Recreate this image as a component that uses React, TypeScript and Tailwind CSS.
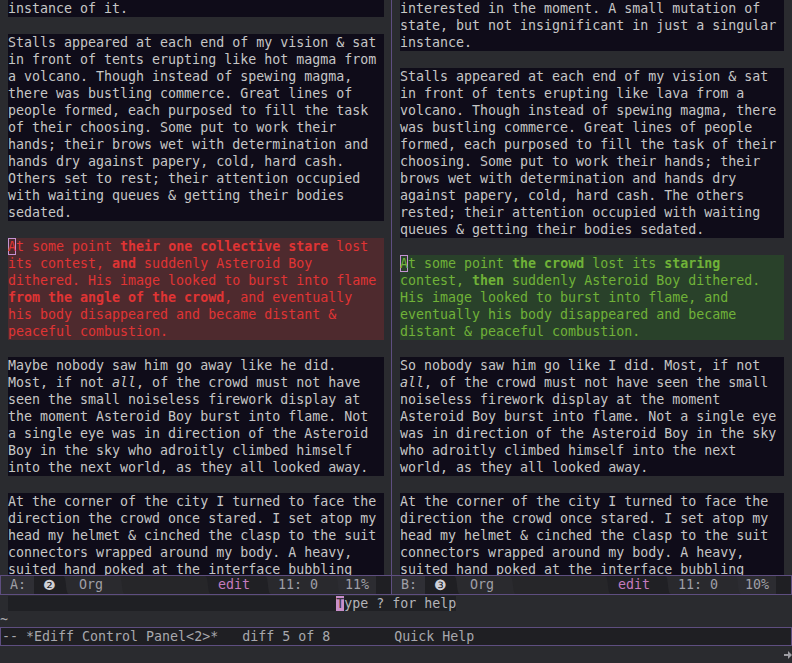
type Tone = "plain" | "red" | "green";
type Item = { lines: string[]; tone?: Tone; cursor?: boolean } | "gap";

const leftPane: Item[] = [
  { lines: ["instance of it."] },
  "gap",
  {
    lines: [
      "Stalls appeared at each end of my vision & sat",
      "in front of tents erupting like hot magma from",
      "a volcano. Though instead of spewing magma,",
      "there was bustling commerce. Great lines of",
      "people formed, each purposed to fill the task",
      "of their choosing. Some put to work their",
      "hands; their brows wet with determination and",
      "hands dry against papery, cold, hard cash.",
      "Others set to rest; their attention occupied",
      "with waiting queues & getting their bodies",
      "sedated.",
    ],
  },
  "gap",
  {
    tone: "red",
    cursor: true,
    lines: [
      "At some point **their one collective stare** lost",
      "its contest, **and** suddenly Asteroid Boy",
      "dithered. His image looked to burst into flame",
      "**from the angle of the crowd**, and eventually",
      "his body disappeared and became distant &",
      "peaceful combustion.",
    ],
  },
  "gap",
  {
    lines: [
      "Maybe nobody saw him go away like he did.",
      "Most, if not _all_, of the crowd must not have",
      "seen the small noiseless firework display at",
      "the moment Asteroid Boy burst into flame. Not",
      "a single eye was in direction of the Asteroid",
      "Boy in the sky who adroitly climbed himself",
      "into the next world, as they all looked away.",
    ],
  },
  "gap",
  {
    lines: [
      "At the corner of the city I turned to face the",
      "direction the crowd once stared. I set atop my",
      "head my helmet & cinched the clasp to the suit",
      "connectors wrapped around my body. A heavy,",
      "suited hand poked at the interface bubbling",
    ],
  },
];

const rightPane: Item[] = [
  {
    lines: [
      "interested in the moment. A small mutation of",
      "state, but not insignificant in just a singular",
      "instance.",
    ],
  },
  "gap",
  {
    lines: [
      "Stalls appeared at each end of my vision & sat",
      "in front of tents erupting like lava from a",
      "volcano. Though instead of spewing magma, there",
      "was bustling commerce. Great lines of people",
      "formed, each purposed to fill the task of their",
      "choosing. Some put to work their hands; their",
      "brows wet with determination and hands dry",
      "against papery, cold, hard cash. The others",
      "rested; their attention occupied with waiting",
      "queues & getting their bodies sedated.",
    ],
  },
  "gap",
  {
    tone: "green",
    cursor: true,
    lines: [
      "At some point **the crowd** lost its **staring**",
      "contest, **then** suddenly Asteroid Boy dithered.",
      "His image looked to burst into flame, and",
      "eventually his body disappeared and became",
      "distant & peaceful combustion.",
    ],
  },
  "gap",
  {
    lines: [
      "So nobody saw him go like I did. Most, if not",
      "_all_, of the crowd must not have seen the small",
      "noiseless firework display at the moment",
      "Asteroid Boy burst into flame. Not a single eye",
      "was in direction of the Asteroid Boy in the sky",
      "who adroitly climbed himself into the next",
      "world, as they all looked away.",
    ],
  },
  "gap",
  {
    lines: [
      "At the corner of the city I turned to face the",
      "direction the crowd once stared. I set atop my",
      "head my helmet & cinched the clasp to the suit",
      "connectors wrapped around my body. A heavy,",
      "suited hand poked at the interface bubbling",
    ],
  },
];

const toneClass: Record<Tone, string> = {
  plain: "bg-[#0f0c19] text-[#c6c6c6]",
  red: "bg-[#4e2a2e] text-[#e03434]",
  green: "bg-[#29412a] text-[#70b238]",
};

function Line({ text, cursor }: { text: string; cursor?: boolean }) {
  let rest = text;
  let head = null;
  if (cursor) {
    head = (
      <span className="inline-block h-[17px] align-top shadow-[inset_0_0_0_1px_#c592d2]">
        {text[0]}
      </span>
    );
    rest = text.slice(1);
  }
  const parts = rest.split(/(\*\*[^*]+\*\*|_[^_]+_)/).filter(Boolean);
  return (
    <div className="h-[17px] whitespace-pre">
      {head}
      {parts.map((p, i) =>
        p.startsWith("**") ? (
          <b key={i} className="font-bold">
            {p.slice(2, -2)}
          </b>
        ) : p.startsWith("_") ? (
          <i key={i} className="italic">
            {p.slice(1, -1)}
          </i>
        ) : (
          <span key={i}>{p}</span>
        )
      )}
    </div>
  );
}

function Pane({ items }: { items: Item[] }) {
  return (
    <div className="flex flex-col">
      {items.map((it, i) =>
        it === "gap" ? (
          <div key={i} className="h-[17px]" />
        ) : (
          <div key={i} className={toneClass[it.tone ?? "plain"]}>
            {it.lines.map((l, j) => (
              <Line key={j} text={l} cursor={it.cursor && j === 0} />
            ))}
          </div>
        )
      )}
    </div>
  );
}

// wave separator between two mode-line segments
function Sep({ from, to }: { from: string; to: string }) {
  return (
    <svg width="8" height="18" viewBox="0 0 8 18" className="shrink-0 block">
      <rect width="8" height="18" fill={to} />
      <path d="M0 0 H1 C5 0 3 18 7 18 H0 Z" fill={from} />
    </svg>
  );
}

function ModeLine({ label, num, pct }: { label: string; num: string; pct: string }) {
  return (
    <div className="flex h-full flex-1 text-[#9f9fa6]">
      <div className="w-[33px] shrink-0 bg-[#2f2f35] pl-[9px]">{label}</div>
      <div className="w-[28px] shrink-0 bg-[#1f1f23] pl-[9px] font-['DejaVu_Sans',sans-serif] text-[14px] text-[#d0d0d6]">
        {num}
      </div>
      <Sep from="#1f1f23" to="#2a2a2e" />
      <div className="w-[48px] shrink-0 bg-[#2a2a2e] pl-[9px]">Org</div>
      <Sep from="#2a2a2e" to="#262629" />
      <div className="flex-1 bg-[#262629]" />
      <Sep from="#262629" to="#202024" />
      <div className="w-[52px] shrink-0 bg-[#202024] pl-[6px] text-[#c47bbf]">edit</div>
      <Sep from="#202024" to="#29292d" />
      <div className="w-[62px] shrink-0 bg-[#29292d] pl-[6px]">11: 0</div>
      <Sep from="#29292d" to="#2c2c31" />
      <div className="w-[34px] shrink-0 bg-[#2c2c31] pl-[3px]">{pct}</div>
      <div className="w-[15px] shrink-0 bg-[#1f1f23]" />
    </div>
  );
}

export default function App() {
  return (
    <div className="w-[792px] h-[663px] overflow-hidden bg-[#2a2b2f] font-['DejaVu_Sans_Mono',monospace] text-[13.3px] leading-[17px] text-[#c6c6c6]">
      <div className="flex h-[575px]">
        <div className="w-[391px] overflow-hidden pl-2 pr-[7px]">
          <Pane items={leftPane} />
        </div>
        <div className="w-px bg-[#5e4e80]" />
        <div className="w-[400px] overflow-hidden pl-2 pr-2">
          <Pane items={rightPane} />
        </div>
      </div>

      <div className="flex h-[20px] border-y border-[#5e4e80] leading-[18px]">
        <div className="flex w-[391px] border-l border-[#5e4e80]">
          <ModeLine label="A:" num="❷" pct="11%" />
        </div>
        <div className="w-px bg-[#5e4e80]" />
        <div className="flex w-[400px] border-r border-[#5e4e80]">
          <ModeLine label="B:" num="❸" pct="10%" />
        </div>
      </div>

      <div className="h-[17px] pl-2">
        <span className="whitespace-pre bg-[#1f2024] text-[#b4b4b8]">
          {" ".repeat(41)}
          <span className="bg-[#c98fca] text-[#3a3340]">T</span>ype ? for help
        </span>
      </div>

      <div className="h-[15px] leading-[15px] text-[#a8a8ad]">~</div>

      <div className="h-[19px] border border-[#5e4e80] bg-[#1f1f23] pl-[1px] leading-[17px] whitespace-pre text-[#a8a8ad]">
        {"-- *Ediff Control Panel<2>*   diff 5 of 8        Quick Help"}
      </div>

      <div className="flex h-[17px] justify-end items-center">
        <svg width="8" height="10" viewBox="0 0 8 10" className="block">
          <path d="M0 4 H4 V1 L8 5 L4 9 V6 H0 Z" fill="#9d9da3" />
        </svg>
      </div>
    </div>
  );
}
